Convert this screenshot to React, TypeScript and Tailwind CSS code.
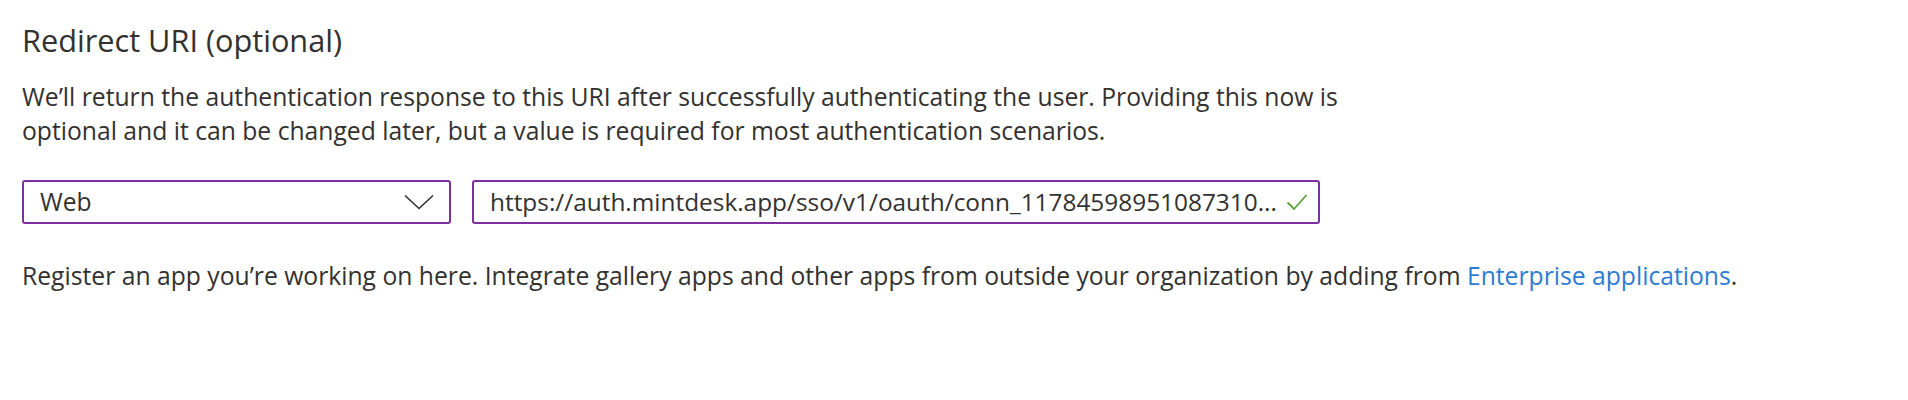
import React from 'react';

const App: React.FC = () => {
  return (
    <div className="min-h-[400px] w-[1908px] bg-white pl-[22px] pt-[20px] text-[#323130] font-['Segoe_UI','Open_Sans',sans-serif]">
      {/* Heading */}
      <h2 className="text-[30.7px] leading-[40px] font-normal">Redirect URI (optional)</h2>

      {/* Description */}
      <p className="mt-[20px] text-[24.7px] leading-[34px]">
        We’ll return the authentication response to this URI after successfully authenticating the user. Providing this now is
        <br />
        optional and it can be changed later, but a value is required for most authentication scenarios.
      </p>

      {/* Platform + URI row */}
      <div className="mt-[32px] flex items-center gap-[21px]">
        <div className="flex h-[44px] w-[429px] items-center justify-between rounded-[3px] border-2 border-[#7e2f9f] pl-[16px] pr-[15px]">
          <span className="text-[24.6px]">Web</span>
          <svg width="30" height="16" viewBox="0 0 30 16" fill="none">
            <path d="M1 1.5 L15 14.5 L29 1.5" stroke="#323130" strokeWidth="1.6" />
          </svg>
        </div>
        <div className="flex h-[44px] w-[848px] items-center rounded-[3px] border-2 border-[#7e2f9f] pl-[16px] pr-[10px]">
          <span className="min-w-0 flex-1 truncate text-[24.4px]">
            https://auth.mintdesk.app/sso/v1/oauth/conn_11784598951087310...
          </span>
          <svg width="22" height="18" viewBox="0 0 22 18" fill="none" className="ml-[4px] shrink-0">
            <path d="M1.5 9.5 L8 16 L20.5 2" stroke="#5aa23a" strokeWidth="1.8" />
          </svg>
        </div>
      </div>

      {/* Footer text */}
      <p className="mt-[35px] text-[24.7px] leading-[34px]">
        Register an app you’re working on here. Integrate gallery apps and other apps from outside your organization by adding from{' '}
        <a className="text-[#2c7bd4]">Enterprise applications</a>.
      </p>
    </div>
  );
};

export default App;
